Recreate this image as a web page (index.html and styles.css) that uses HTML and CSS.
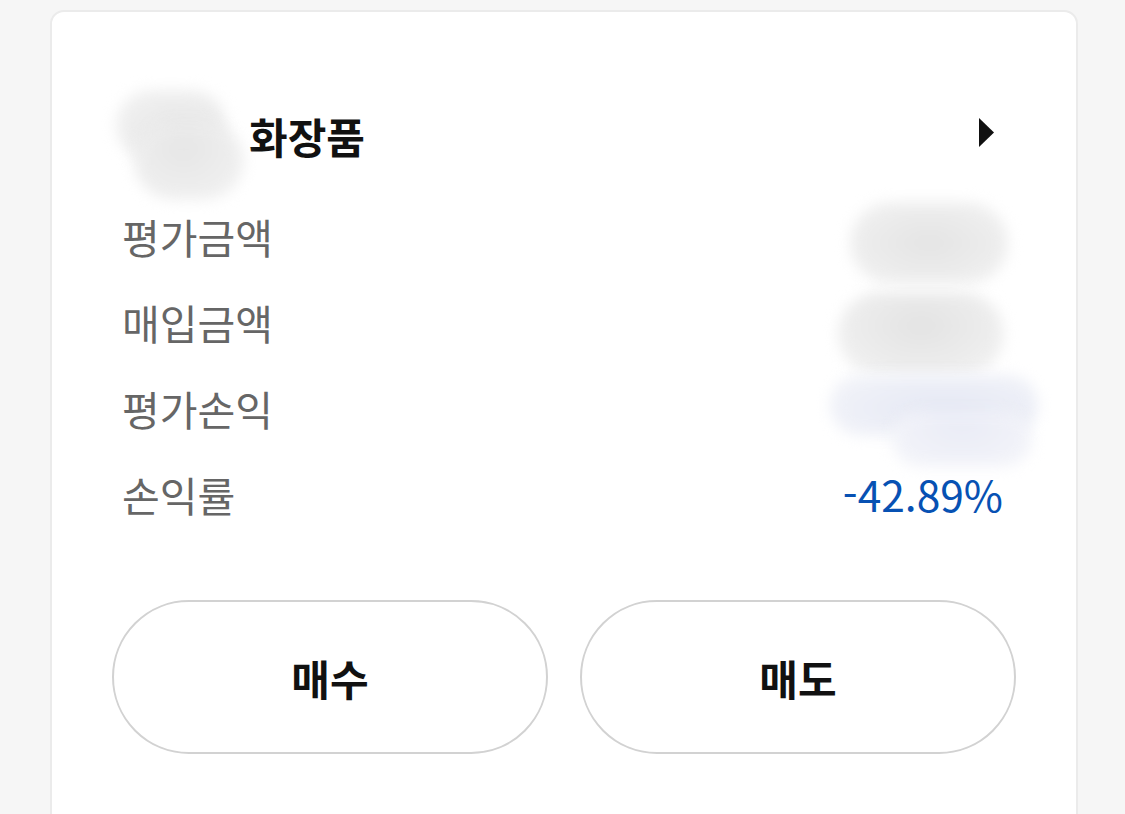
FILE: index.html
```html
<!DOCTYPE html>
<html lang="ko">
<head>
<meta charset="utf-8">
<link rel="stylesheet" href="styles.css">
</head>
<body>
<div class="card">
  <div class="info">
    <div class="title-row">
      <div class="title"><span class="title-hidden"></span>화장품</div>
      <svg class="caret" width="15" height="29" viewBox="0 0 15 29"><path d="M0 0 L15 14.5 L0 29 Z" fill="#111"/></svg>
    </div>
    <div class="row"><span class="label">평가금액</span><span class="value"></span></div>
    <div class="row"><span class="label">매입금액</span><span class="value"></span></div>
    <div class="row"><span class="label">평가손익</span><span class="value"></span></div>
    <div class="row"><span class="label">손익률</span><span class="value rate">-42.89%</span></div>
  </div>
  <div class="actions">
    <button class="btn">매수</button>
    <button class="btn">매도</button>
  </div>
  <div class="blob blob-title"></div>
  <div class="blob blob-title2"></div>
  <div class="blob blob-a"></div>
  <div class="blob blob-b"></div>
  <div class="blob blob-c"></div>
  <div class="blob blob-d"></div>
</div>
</body>
</html>
```
FILE: styles.css
```css
* { box-sizing: border-box; }
html, body { margin: 0; padding: 0; }
body {
  background: #f6f6f6;
  font-family: "Noto Sans CJK KR", "Noto Sans", sans-serif;
  width: 1125px;
  height: 814px;
  overflow: hidden;
}
.card {
  position: relative;
  margin: 10px 0 0 50px;
  width: 1028px;
  min-height: 900px;
  background: #fff;
  border: 2px solid #ebebeb;
  border-radius: 14px;
  padding: 93px 60px 0 60px;
}
.info {
  padding: 0 13px 0 10px;
}
.title-row {
  display: flex;
  align-items: center;
  justify-content: space-between;
  height: 60px;
  margin-bottom: 30px;
}
.title {
  font-size: 42px;
  font-weight: 700;
  color: #111;
  display: flex;
  align-items: center;
}
.title-hidden {
  display: inline-block;
  width: 127px;
}
.caret { margin-right: 9px; margin-top: -6px; }
.row {
  display: flex;
  align-items: center;
  justify-content: space-between;
  height: 86px;
}
.label {
  font-size: 41px;
  color: #666;
  line-height: 1;
  margin-top: -3px;
}
.value {
  font-size: 42.5px;
  line-height: 1;
}
.rate { color: #0751b3; margin-top: -3px; }
.actions {
  display: flex;
  gap: 32px;
  margin-top: 61px;
}
.btn {
  flex: 1;
  height: 154px;
  border: 2px solid #d2d2d2;
  border-radius: 77px;
  background: #fff;
  font-family: "Noto Sans CJK KR", "Noto Sans", sans-serif;
  font-size: 42px;
  font-weight: 700;
  color: #111;
}
.blob {
  position: absolute;
  border-radius: 50px;
  filter: blur(7px);
}
.blob-title {
  left: 64px; top: 78px; width: 110px; height: 70px;
  background: radial-gradient(ellipse at 60% 60%, #e6e6e6 0%, #eeeeee 60%, #f5f5f5 100%);
}
.blob-title2 {
  left: 82px; top: 110px; width: 110px; height: 78px;
  background: radial-gradient(ellipse at 45% 35%, #e6e6e6 0%, #eeeeee 60%, #f6f6f6 100%);
}
.blob-a {
  left: 798px; top: 190px; width: 158px; height: 82px;
  background: radial-gradient(ellipse at 50% 50%, #e4e4e4 0%, #ececec 55%, #f4f4f4 100%);
}
.blob-b {
  left: 786px; top: 280px; width: 166px; height: 84px;
  background: radial-gradient(ellipse at 50% 40%, #e3e3e3 0%, #ececec 55%, #f5f5f5 100%);
}
.blob-c {
  left: 778px; top: 362px; width: 208px; height: 62px;
  background: radial-gradient(ellipse at 55% 55%, #e5e8f4 0%, #edeff7 55%, #f6f7fa 100%);
}
.blob-d {
  left: 840px; top: 400px; width: 140px; height: 55px;
  background: radial-gradient(ellipse at 50% 30%, #eaecf6 0%, #f0f1f8 55%, #f7f8fb 100%);
}
```
